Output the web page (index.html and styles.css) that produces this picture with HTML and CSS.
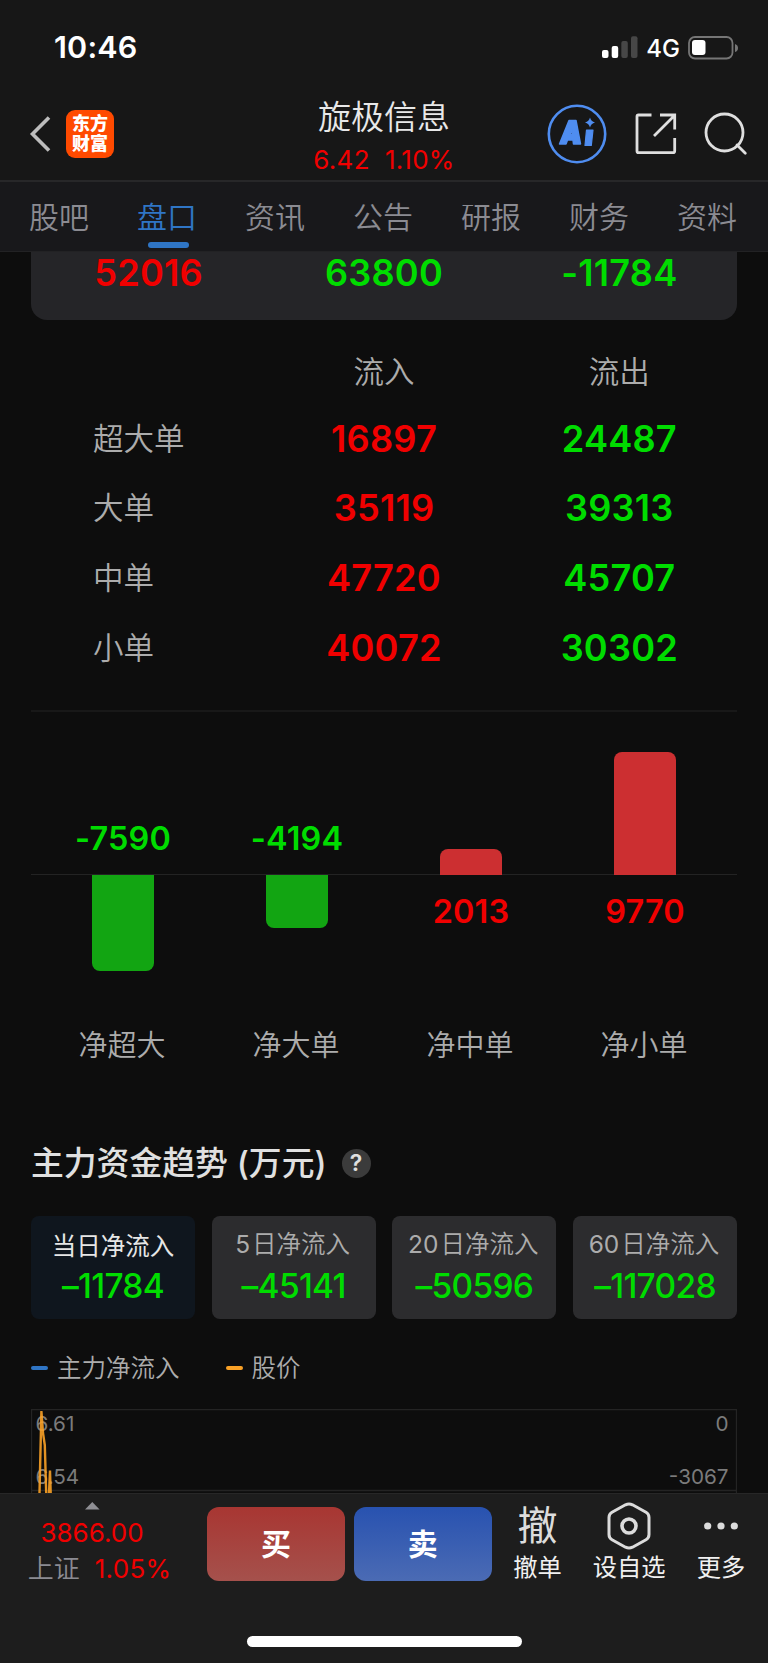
FILE: index.html
```html
<!DOCTYPE html>
<html lang="zh-CN">
<head>
    <meta charset="UTF-8">
    <meta name="viewport" content="width=device-width, initial-scale=1.0">
    <title>旋极信息</title>
    <link rel="stylesheet" href="styles.css">
</head>
<body>
    <div class="status-bar">
        <span class="time">10:46</span>
        <div class="status-right">
            <svg width="36" height="24" viewBox="0 0 36 24">
                <rect x="0" y="14" width="6.5" height="8" rx="2" fill="#fff"/>
                <rect x="9.7" y="10" width="6.5" height="12" rx="2" fill="#fff"/>
                <rect x="19.3" y="5" width="6.5" height="17" rx="2" fill="#474747"/>
                <rect x="29" y="0.3" width="6.5" height="21.7" rx="2" fill="#474747"/>
            </svg>
            <span class="network">4G</span>
            <svg width="52" height="24" viewBox="0 0 52 24">
                <rect x="1" y="1" width="43.5" height="21.5" rx="6" fill="none" stroke="#767676" stroke-width="1.8"/>
                <rect x="4" y="4" width="13.5" height="15" rx="3" fill="#fff"/>
                <path d="M47 8 Q50 9 50 12 Q50 15 47 16Z" fill="#767676"/>
            </svg>
        </div>
    </div>

    <header class="header">
        <div class="header-left">
            <svg width="22" height="38" viewBox="0 0 22 38">
                <path d="M20 2.5 L3.5 19 L20 35.5" fill="none" stroke="#bdbdbd" stroke-width="3.6"/>
            </svg>
            <div class="logo"><span>东方</span><span>财富</span></div>
        </div>
        <div class="header-title">
            <h1>旋极信息</h1>
            <p><span>6.42</span><span>1.10%</span></p>
        </div>
        <div class="header-right">
            <svg width="60" height="60" viewBox="0 0 60 60">
                <circle cx="30" cy="30" r="28.2" fill="none" stroke="#4f8df0" stroke-width="2.6"/>
                <path fill-rule="evenodd" d="M22 16.5 H29 L33.5 40 H26.5 L26 36 H20.5 L19 40 H12.5 Z M23 30.5 H25.4 L24.8 25 Z" fill="#4f8df0" stroke="#4f8df0" stroke-width="1.5" stroke-linejoin="round"/>
                <path d="M39.5 26 H46 L44.3 41.5 H38 Z" fill="#4f8df0" stroke="#4f8df0" stroke-width="1.2" stroke-linejoin="round"/>
                <path d="M43 13.5 Q44 17.5 48 18.5 Q44 19.5 43 23.5 Q42 19.5 38 18.5 Q42 17.5 43 13.5Z" fill="#4f8df0"/>
            </svg>
            <svg width="42" height="42" viewBox="0 0 42 42">
                <g fill="none" stroke="#dfdfdf" stroke-width="2.8">
                    <path d="M16.5 2 H3.5 Q2 2 2 3.5 V38 Q2 39.7 3.5 39.7 H38 Q39.7 39.7 39.7 38 V25"/>
                    <path d="M25 2 H39.7 V16.5 M39 3 L19 23"/>
                </g>
            </svg>
            <svg width="44" height="44" viewBox="0 0 44 44">
                <g fill="none" stroke="#dfdfdf" stroke-width="2.8">
                    <circle cx="20.5" cy="20.5" r="18.5"/>
                    <path d="M33 33 L41.3 41.3" stroke-linecap="round"/>
                </g>
            </svg>
        </div>
    </header>

    <nav class="tabs">
        <a>股吧</a>
        <a class="active">盘口</a>
        <a>资讯</a>
        <a>公告</a>
        <a>研报</a>
        <a>财务</a>
        <a>资料</a>
    </nav>

    <main class="content">
        <div class="summary">
            <span class="red">52016</span>
            <span class="green">63800</span>
            <span class="green">-11784</span>
        </div>

        <div class="orders">
            <div class="order-row order-head"><span></span><span>流入</span><span>流出</span></div>
            <div class="order-row"><span>超大单</span><b class="red">16897</b><b class="green">24487</b></div>
            <div class="order-row"><span>大单</span><b class="red">35119</b><b class="green">39313</b></div>
            <div class="order-row"><span>中单</span><b class="red">47720</b><b class="green">45707</b></div>
            <div class="order-row"><span>小单</span><b class="red">40072</b><b class="green">30302</b></div>
        </div>

        <!-- Net flow bars, above and below the zero line -->
        <div class="net-chart">
            <div class="net-col">
                <div class="up"><b class="green">-7590</b></div>
                <div class="down"><i class="bar bar-down" style="height: 96px"></i></div>
                <span>净超大</span>
            </div>
            <div class="net-col">
                <div class="up"><b class="green">-4194</b></div>
                <div class="down"><i class="bar bar-down" style="height: 53px"></i></div>
                <span>净大单</span>
            </div>
            <div class="net-col">
                <div class="up"><i class="bar bar-up" style="height: 26px"></i></div>
                <div class="down"><b class="red">2013</b></div>
                <span>净中单</span>
            </div>
            <div class="net-col">
                <div class="up"><i class="bar bar-up" style="height: 123px"></i></div>
                <div class="down"><b class="red">9770</b></div>
                <span>净小单</span>
            </div>
        </div>

        <div class="section-title">
            <h2>主力资金趋势<span>(万元)</span></h2>
            <span class="help">?</span>
        </div>

        <div class="periods">
            <div class="period active"><span>当日净流入</span><b>–11784</b></div>
            <div class="period"><span><i>5</i>日净流入</span><b>–45141</b></div>
            <div class="period"><span><i>20</i>日净流入</span><b>–50596</b></div>
            <div class="period"><span><i>60</i>日净流入</span><b>–117028</b></div>
        </div>

        <div class="legend">
            <span class="blue-key">主力净流入</span>
            <span class="orange-key">股价</span>
        </div>

        <svg class="trend" width="706" height="84" viewBox="0 0 706 84">
            <path d="M0.5 84 V0.5 H705.5 V84 M0 81.5 H705" fill="none" stroke="#242424" stroke-width="1.3"/>
            <g class="trend-labels">
                <text x="4.5" y="22">6.61</text>
                <text x="4.5" y="75">6.54</text>
                <text x="697.5" y="22" text-anchor="end">0</text>
                <text x="697.5" y="75" text-anchor="end">-3067</text>
            </g>
            <path d="M8.5 84 L10.4 2 L12 24 L13.8 36 L15.2 84 M18 84 L19 61.5 L19.7 84" fill="none" stroke="#f9a126" stroke-width="2.4" stroke-opacity="0.9"/>
        </svg>
    </main>

    <footer class="bottom-bar">
        <div class="index">
            <svg width="15" height="8" viewBox="0 0 15 8"><path d="M0 7.5 L7.3 0 L14.6 7.5Z" fill="#8e8e93"/></svg>
            <span class="index-price">3866.00</span>
            <div class="index-row"><span>上证</span><em>1.05%</em></div>
        </div>
        <button class="buy" type="button">买</button>
        <button class="sell" type="button">卖</button>
        <div class="actions">
            <div class="action"><span class="glyph">撤</span><span>撤单</span></div>
            <div class="action">
                <svg width="46" height="48" viewBox="0 0 46 48">
                    <g fill="none" stroke="#dcdcdc">
                        <path d="M19.5 2.8 Q23 1 26.5 2.8 L40 10.3 Q43 12 43 15.5 V32.5 Q43 36 40 37.7 L26.5 45.2 Q23 47 19.5 45.2 L6 37.7 Q3 36 3 32.5 V15.5 Q3 12 6 10.3Z" stroke-width="3"/>
                        <circle cx="23" cy="24" r="7" stroke-width="3.6"/>
                    </g>
                </svg>
                <span>设自选</span>
            </div>
            <div class="action">
                <svg width="36" height="48" viewBox="0 0 36 48">
                    <g fill="#dcdcdc">
                        <circle cx="4.7" cy="24" r="3.6"/>
                        <circle cx="18" cy="24" r="3.6"/>
                        <circle cx="31.3" cy="24" r="3.6"/>
                    </g>
                </svg>
                <span>更多</span>
            </div>
        </div>
        <div class="home-indicator"></div>
    </footer>
</body>
</html>
```
FILE: styles.css
```css
* {
    box-sizing: border-box;
}

body {
    margin: 0;
    width: 768px;
    height: 1663px;
    overflow: hidden;
    display: flex;
    flex-direction: column;
    background-color: #0d0d0d;
    color: #acacac;
    font-family: Inter, "Noto Sans CJK SC", sans-serif;
    font-weight: 350;
    line-height: 1;
}

h1, h2, p {
    margin: 0;
}

svg {
    display: block;
    flex: none;
}

b {
    font-weight: 570;
    letter-spacing: 0.2px;
}

.red {
    color: #f00000;
}

.green {
    color: #00dc00;
}

/* Status bar */
.status-bar {
    height: 91px;
    padding: 4px 28px 0 54px;
    display: flex;
    justify-content: space-between;
    align-items: center;
    background-color: #171717;
    color: #fff;
}

.time {
    font-size: 30.5px;
    font-weight: 600;
    letter-spacing: 0.2px;
}

.status-right {
    display: flex;
    align-items: center;
}

.network {
    width: 50px;
    text-align: center;
    font-size: 24px;
    font-weight: 500;
    padding-top: 2px;
}

/* Header */
.header {
    height: 91px;
    display: grid;
    grid-template-columns: 240px 288px 240px;
    align-items: center;
    background-color: #171717;
    border-bottom: 2px solid #272729;
}

.header-left {
    display: flex;
    align-items: center;
    gap: 15px;
    padding: 0 0 4px 29px;
}

.logo {
    width: 48px;
    height: 48px;
    border-radius: 9px;
    background-color: #ff4a00;
    color: #fff;
    display: flex;
    flex-direction: column;
    align-items: center;
    justify-content: center;
    font-size: 18px;
    font-weight: 900;
}

.logo span {
    line-height: 20px;
}

.header-title {
    text-align: center;
    padding-top: 6px;
}

.header-title h1 {
    font-size: 33px;
    font-weight: 350;
    line-height: 41px;
    color: #e8e8e8;
}

.header-title p {
    display: flex;
    justify-content: center;
    gap: 15px;
    font-size: 26px;
    font-weight: 400;
    letter-spacing: 0.3px;
    line-height: 43px;
    color: #f00000;
}

.header-right {
    display: flex;
    align-items: center;
    justify-content: flex-end;
    gap: 27.5px;
    padding: 0 20px 4px 0;
}

/* Tabs */
.tabs {
    height: 70px;
    padding: 0 31px 0 29px;
    display: flex;
    justify-content: space-between;
    background-color: #18181b;
    border-bottom: 1px solid #222224;
    color: #8b8b92;
    font-size: 30px;
}

.tabs a {
    display: flex;
    flex-direction: column;
    align-items: center;
    line-height: 70px;
}

.tabs .active {
    color: #2f75c5;
}

.tabs .active::after {
    content: "";
    width: 41px;
    height: 6px;
    border-radius: 3px;
    background-color: #2f75c5;
    margin: -10px 0 0 2px;
}

/* Scrolling content */
.content {
    height: 1241px;
    padding: 0 31px;
}

.summary {
    height: 68px;
    display: grid;
    grid-template-columns: repeat(3, 1fr);
    text-align: center;
    line-height: 42px;
    background-color: #252528;
    border-radius: 0 0 16px 16px;
    font-size: 36.2px;
    font-weight: 570;
    letter-spacing: 0.2px;
}

.orders {
    height: 392px;
    padding-top: 20px;
    border-bottom: 2px solid #181818;
}

.order-row {
    height: 69.7px;
    display: grid;
    grid-template-columns: repeat(3, 1fr);
    align-items: center;
    text-align: center;
    font-size: 30.5px;
}

.order-head {
    height: 64px;
}

.order-row span:first-child {
    text-align: left;
    padding-left: 62px;
}

.order-row b {
    font-size: 36.2px;
}

/* Net flow chart */
.net-chart {
    display: grid;
    grid-template-columns: repeat(4, 174px);
    height: 423px;
    padding-left: 5px;
    background: linear-gradient(#232323, #232323) 0 162px / 100% 1px no-repeat;
}

.net-col {
    display: flex;
    flex-direction: column;
    align-items: center;
    font-size: 29px;
}

.net-col > span {
    margin-left: -2px;
}

.net-col b {
    font-size: 32.4px;
}

.up {
    height: 163px;
    display: flex;
    align-items: flex-end;
}

.up b {
    padding-bottom: 20px;
}

.down {
    height: 156px;
}

.down b {
    display: block;
    padding-top: 21px;
}

.bar {
    display: block;
    width: 62px;
}

.bar-up {
    background-color: #cc2f31;
    border-radius: 8px 8px 0 0;
}

.bar-down {
    background-color: #12a512;
    border-radius: 0 0 8px 8px;
}

/* Trend section */
.section-title {
    height: 56px;
    display: flex;
    align-items: center;
    gap: 15px;
}

.section-title h2 {
    font-size: 32.8px;
    font-weight: 450;
    color: #e0e0e0;
}

.section-title h2 span {
    margin-left: 9px;
}

.help {
    width: 29px;
    height: 29px;
    border-radius: 50%;
    background-color: #3b3b3b;
    color: #e0e0e0;
    text-align: center;
    font-size: 23px;
    font-weight: 600;
    line-height: 29px;
}

.periods {
    display: grid;
    grid-template-columns: repeat(4, 164px);
    justify-content: space-between;
    margin-top: 25px;
}

.period {
    height: 103px;
    padding-top: 15px;
    border-radius: 8px;
    background-color: #2c2c2e;
    display: flex;
    flex-direction: column;
    align-items: center;
    font-size: 24.5px;
    white-space: nowrap;
}

.period span {
    line-height: 26px;
    margin-left: -2px;
}

.period i {
    font-style: normal;
    font-weight: 400;
    margin-right: 2px;
}

.period b {
    color: #00dc00;
    font-size: 33.5px;
    font-weight: 500;
    letter-spacing: -0.7px;
    line-height: 40px;
    margin-top: 9px;
}

.period.active {
    background-color: #0f161e;
    padding-top: 17px;
}

.period.active span {
    color: #e6e6e6;
    font-weight: 400;
    margin-left: 0;
}

.period.active b {
    margin-top: 7px;
}

.legend {
    height: 90px;
    padding-top: 8px;
    display: flex;
    align-items: center;
    gap: 46px;
    font-size: 24.5px;
}

.legend span {
    display: flex;
    align-items: center;
    gap: 9px;
}

.legend span::before {
    content: "";
    width: 17px;
    height: 4px;
    border-radius: 2px;
    background-color: #2f75c5;
}

.legend .orange-key::before {
    background-color: #f9a126;
}

.trend-labels {
    font-size: 20.7px;
    font-weight: 400;
    fill: #7b7b7b;
}

/* Bottom bar */
.bottom-bar {
    height: 170px;
    border-top: 1px solid #272727;
    background-color: #1d1d1d;
    display: grid;
    grid-template-columns: 198px 138px 138px 1fr;
    grid-template-rows: 142px 1fr;
    column-gap: 8.9px;
}

.index {
    padding: 8px 14px 0 0;
    display: flex;
    flex-direction: column;
    align-items: center;
    font-size: 26px;
    font-weight: 400;
}

.index-price {
    color: #f00000;
    line-height: 36px;
    margin-top: 5px;
}

.index-row {
    display: flex;
    gap: 15px;
    line-height: 36px;
    padding-left: 15px;
    color: #8b8b92;
    font-weight: 350;
}

.index-row em {
    font-style: normal;
    font-weight: 400;
    color: #f00000;
    letter-spacing: 0.3px;
}

.buy,
.sell {
    height: 74px;
    margin-top: 13px;
    padding: 0 0 4px;
    border: none;
    border-radius: 12px;
    color: #fff;
    font-family: inherit;
    font-size: 30px;
    font-weight: 700;
}

.buy {
    background: linear-gradient(#a83632, #a5514c);
}

.sell {
    background: linear-gradient(#2852b0, #4b6bb4);
}

.actions {
    display: flex;
    gap: 31px;
    padding: 8px 0 0 12.5px;
}

.action {
    display: flex;
    flex-direction: column;
    align-items: center;
    color: #f0f0f0;
    font-size: 24.3px;
    font-weight: 400;
    line-height: 34px;
    white-space: nowrap;
}

.action .glyph {
    font-size: 40px;
    line-height: 48px;
    color: #dcdcdc;
}

.home-indicator {
    grid-column: 1 / -1;
    justify-self: center;
    width: 275px;
    height: 11px;
    border-radius: 6px;
    background-color: #fff;
}
```
